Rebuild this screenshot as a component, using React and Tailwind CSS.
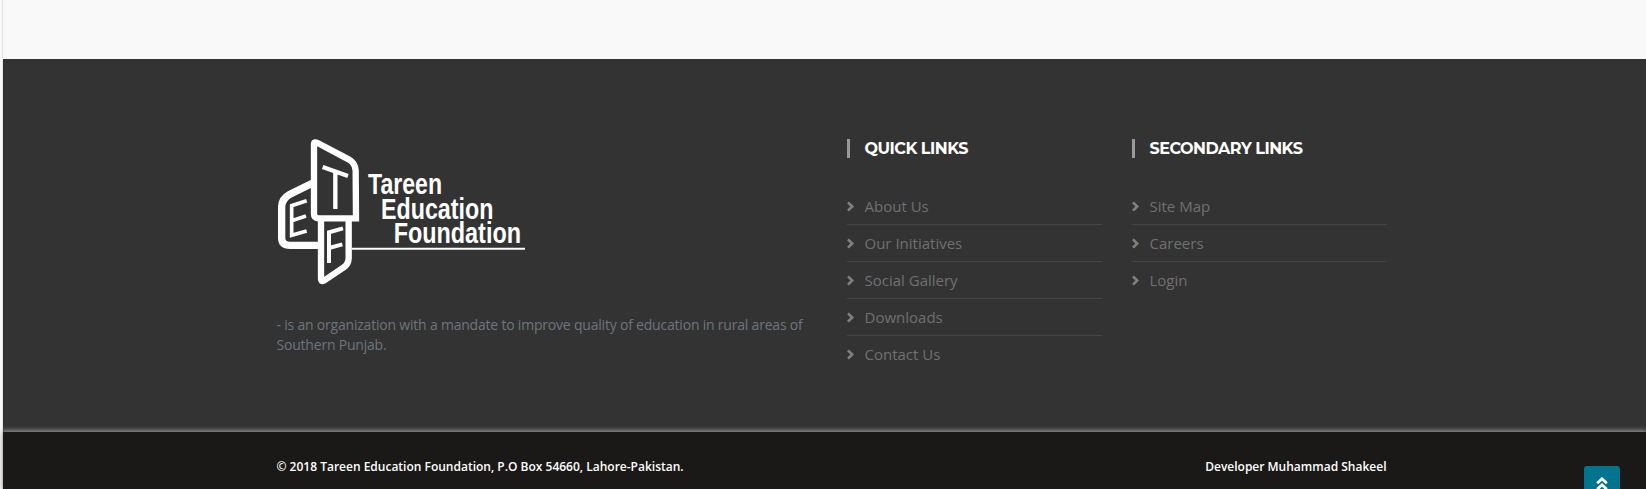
import React from "react";

const QUICK = ["About Us", "Our Initiatives", "Social Gallery", "Downloads", "Contact Us"];
const SECONDARY = ["Site Map", "Careers", "Login"];

function Logo() {
  return (
    <svg className="block h-[165px] w-[270px]" viewBox="0 0 810 495" fill="none" stroke="#fff" aria-label="Tareen Education Foundation">
      <path d="M142 160 L75 193 Q51 206 50 230 V325 Q51 346 75 346 H162" strokeWidth="22" />
      <path d="M147 41 Q148 34 158 39 L251 88 Q271 99 272 122 L273 265 H160 Q147 264 147 252 Z" strokeWidth="19" />
      <path d="M168 270 V446 Q169 458 180 450 L236 412 Q251 402 251 383 V270" strokeWidth="19" />
      <path d="M173 111 L249 138 M211 126 V237" strokeWidth="13" />
      <path d="M125 212 L80 227 V316 L125 303 M80 272 L123 258" strokeWidth="11" />
      <path d="M234 295 L192 307 V399 M192 354 L232 343" strokeWidth="12" />
      <path d="M260 356 H780" strokeWidth="6" />
      <g fill="#fff" stroke="none" className="font-['Liberation_Sans'] font-bold" fontSize="89">
        <text x="309" y="192" textLength="222" lengthAdjust="spacingAndGlyphs">Tareen</text>
        <text x="348" y="266" textLength="337" lengthAdjust="spacingAndGlyphs">Education</text>
        <text x="386" y="340" textLength="382" lengthAdjust="spacingAndGlyphs">Foundation</text>
      </g>
    </svg>
  );
}

function Heading({ children }) {
  return (
    <h4 className="h-[19px] border-l-[3px] border-[#999] pl-[15px] font-[Montserrat,Inter,sans-serif] text-[16px] leading-[19px] font-bold tracking-[-0.5px] whitespace-nowrap text-white">
      {children}
    </h4>
  );
}

function Links({ items }) {
  return (
    <ul className="mt-[30px]">
      {items.map((t) => (
        <li key={t} className="flex h-[37px] items-center border-b border-[#444] text-[15px] text-[#707070] last:border-transparent">
          <svg className="mr-[10px] h-[11px] w-[8px]" viewBox="0 0 8 11" fill="none" stroke="#808080" strokeWidth="2.6">
            <path d="M1 1.3 L5.2 5.5 L1 9.7" />
          </svg>
          <a href="#">{t}</a>
        </li>
      ))}
    </ul>
  );
}

export default function App() {
  return (
    <div className="flex h-[489px] overflow-hidden bg-[#f9f9f9] font-['Open_Sans',sans-serif]">
      <div className="w-[3px] shrink-0 border-r border-[#e4e4e4] bg-[#f9f9f9]" />
      <div className="relative flex grow flex-col">
        <div className="h-[59px]" />
        <footer className="h-[373px] bg-[#333]">
          <div className="ml-[273.5px] grid w-[1110px] grid-cols-[540px_255px_255px] gap-x-[30px] pt-[80px]">
            <div>
              <div className="-mt-[9px] -ml-[11.5px]">
                <Logo />
              </div>
              <p className="mt-[20px] text-[14px] leading-[20px] tracking-[-0.205px] text-[#6c757d]">
                - is an organization with a mandate to improve quality of education in rural areas of Southern Punjab.
              </p>
            </div>
            <div>
              <Heading>QUICK LINKS</Heading>
              <Links items={QUICK} />
            </div>
            <div>
              <Heading>SECONDARY LINKS</Heading>
              <Links items={SECONDARY} />
            </div>
          </div>
        </footer>
        <div className="h-[57px] bg-[#1a1917] shadow-[0_0_5px_1px_#aaa]">
          <div className="ml-[273.5px] flex w-[1110px] justify-between pt-[25px] text-[12px] leading-[20px] font-semibold text-white">
            <span>© 2018 Tareen Education Foundation, P.O Box 54660, Lahore-Pakistan.</span>
            <span>Developer Muhammad Shakeel</span>
          </div>
        </div>
        <a href="#" className="absolute top-[466px] left-[1581px] flex h-[36px] w-[36px] justify-center rounded-[3px] bg-[#00748e] pt-[11px]">
          <svg className="h-[16px] w-[12px]" viewBox="0 0 12 16" fill="none" stroke="#fff" strokeWidth="2.8">
            <path d="M1.2 6.2 L6 1.8 L10.8 6.2 M1.2 12.2 L6 7.8 L10.8 12.2" />
          </svg>
        </a>
      </div>
    </div>
  );
}
